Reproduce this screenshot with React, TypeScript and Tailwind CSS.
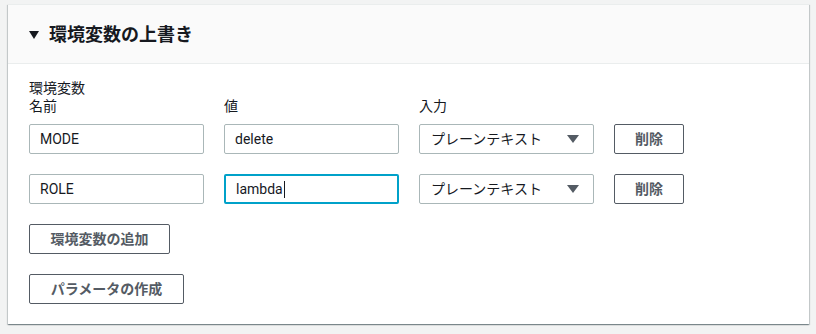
import React from "react";

const font = { fontFamily: 'Roboto, "Noto Sans CJK JP", sans-serif' };

function TextBox({ value, focused }: { value: string; focused?: boolean }) {
  return (
    <div
      className={
        "w-[175px] h-[30px] rounded-[2px] flex items-center px-[10px] text-[14px] text-[#16191f] bg-white " +
        (focused ? "border-2 border-[#00a1c9] px-[9px]" : "border border-[#aab7b8]")
      }
    >
      <span>{value}</span>
      {focused && <span className="inline-block w-px h-[17px] bg-[#16191f] ml-px" />}
    </div>
  );
}

function SelectBox() {
  return (
    <div className="w-[175px] h-[30px] rounded-[2px] border border-[#aab7b8] bg-white flex items-center justify-between pl-[11px] pr-[14px] text-[14px] text-[#16191f]">
      <span>プレーンテキスト</span>
      <svg width="12" height="8" viewBox="0 0 12 8">
        <polygon points="0,0 12,0 6,8" fill="#545b64" />
      </svg>
    </div>
  );
}

function Btn({ children, w }: { children: React.ReactNode; w: string }) {
  return (
    <div
      className={
        w +
        " h-[30px] rounded-[2px] border border-[#545b64] bg-white flex items-center justify-center text-[14px] font-bold text-[#545b64]"
      }
    >
      {children}
    </div>
  );
}

export default function App() {
  return (
    <div className="w-[816px] h-[334px] bg-[#f2f3f3] pt-[4px] pl-[8px] pr-[7px]" style={font}>
      <div className="bg-white h-[320px] shadow-[0_1px_1px_0_rgba(0,28,36,0.3),1px_1px_1px_0_rgba(0,28,36,0.15),-1px_1px_1px_0_rgba(0,28,36,0.15)] border-t border-[#eaeded]">
        <div className="h-[59px] bg-[#fafafa] border-b border-[#eaeded] flex items-center pl-[21px]">
          <svg width="10" height="8" viewBox="0 0 10 8" className="mr-[10px] mt-[1px]">
            <polygon points="0,0 10,0 5,8" fill="#16191f" />
          </svg>
          <span className="text-[18px] font-bold text-[#16191f]">環境変数の上書き</span>
        </div>
        <div className="pl-[21px] pt-[15px]">
          <div className="text-[14px] leading-[18px] text-[#16191f]">環境変数</div>
          <div className="flex gap-[20px] text-[14px] leading-[18px] text-[#16191f]">
            <div className="w-[175px]">名前</div>
            <div className="w-[175px]">値</div>
            <div className="w-[175px]">入力</div>
          </div>
          <div className="flex flex-col gap-[20px] mt-[9px]">
            <div className="flex gap-[20px]">
              <TextBox value="MODE" />
              <TextBox value="delete" />
              <SelectBox />
              <Btn w="w-[70px]">削除</Btn>
            </div>
            <div className="flex gap-[20px]">
              <TextBox value="ROLE" />
              <TextBox value="lambda" focused />
              <SelectBox />
              <Btn w="w-[70px]">削除</Btn>
            </div>
            <Btn w="w-[141px]">環境変数の追加</Btn>
            <Btn w="w-[155px]">パラメータの作成</Btn>
          </div>
        </div>
      </div>
    </div>
  );
}
